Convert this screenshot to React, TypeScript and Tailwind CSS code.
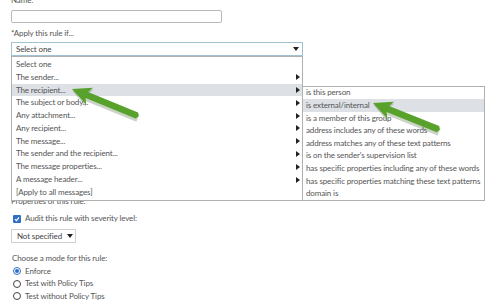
import * as React from "react";

const conditions = [
  { label: "Select one", sub: false },
  { label: "The sender...", sub: true },
  { label: "The recipient...", sub: true, active: true },
  { label: "The subject or body...", sub: true },
  { label: "Any attachment...", sub: true },
  { label: "Any recipient...", sub: true },
  { label: "The message...", sub: true },
  { label: "The sender and the recipient...", sub: true },
  { label: "The message properties...", sub: true },
  { label: "A message header...", sub: true },
  { label: "[Apply to all messages]", sub: false },
];

const recipientOptions = [
  "is this person",
  "is external/internal",
  "is a member of this group",
  "address includes any of these words",
  "address matches any of these text patterns",
  "is on the sender's supervision list",
  "has specific properties including any of these words",
  "has specific properties matching these text patterns",
  "domain is",
];

const RightCaret = () => (
  <svg width="4" height="6" viewBox="0 0 4 6" className="shrink-0">
    <path d="M0 0 L4 3 L0 6 Z" fill="#222" />
  </svg>
);

const DownCaret = () => (
  <svg width="6" height="4" viewBox="0 0 6 4" className="shrink-0">
    <path d="M0 0 L6 0 L3 4 Z" fill="#222" />
  </svg>
);

const GreenArrow = ({ x, y, angle, length }: { x: number; y: number; angle: number; length: number }) => (
  <g transform={`translate(${x} ${y}) rotate(${angle})`}>
    <polygon points={`1,1.5 20,-7.5 17,-2 ${length},-2 ${length},6 17,6 20,11.5`} fill="#2f4a1c" opacity="0.25" />
    <polygon points={`0,0 19,-9 16,-3.3 ${length - 2},-3.3 ${length},0 ${length - 2},3.3 16,3.3 19,9`} fill="#58a22c" />
  </g>
);

export default function App() {
  return (
    <div className="relative w-[504px] h-[308px] overflow-hidden bg-white pl-[11px] text-[8px] leading-[13px] tracking-[-0.13px] text-[#555]" style={{ fontFamily: "Lato, 'Open Sans', sans-serif" }}>
      <div className="-mt-[6px] h-[13px]">Name:</div>
      <div className="mt-[3px] h-[13px] w-[211px] rounded-[2px] border border-[#b8b8b8]" />

      <div className="mt-[4px] h-[13px]">*Apply this rule if...</div>

      <div className="relative mt-[2px]">
        <div className="flex h-[14px] w-[292px] items-center justify-between border border-[#9fc3d3] pl-[4px] pr-[3px] text-[#444]">
          <span>Select one</span>
          <DownCaret />
        </div>

        <div className="absolute left-0 top-[14px] z-10 w-[292px] border border-[#b0b0b0] bg-white py-[1px]">
          {conditions.map((c) => (
            <div key={c.label} className={`relative flex h-[12.8px] items-center justify-between pl-[4px] pr-[2px] ${c.active ? "bg-[#dde1e6]" : ""}`}>
              <span>{c.label}</span>
              {c.sub && <RightCaret />}
              {c.active && (
                <div className="absolute left-[290px] top-[2px] w-[183px] border border-[#b0b0b0] bg-white">
                  {recipientOptions.map((o, i) => (
                    <div key={o} className={`flex h-[12.6px] items-center whitespace-nowrap pl-[3px] ${i === 1 ? "bg-[#dde1e6]" : ""}`}>
                      {o}
                    </div>
                  ))}
                </div>
              )}
            </div>
          ))}
        </div>
      </div>

      <div className="mt-[139px] h-[13px]">Properties of this rule:</div>

      <div className="mt-[4px] flex h-[13px] items-center gap-[4px] pl-[2px]">
        <span className="flex h-[8px] w-[8px] items-center justify-center rounded-[1px] bg-[#2f6fc6]">
          <svg width="6" height="6" viewBox="0 0 6 6">
            <path d="M1 3.2 L2.5 4.6 L5 1.4" stroke="#fff" strokeWidth="1.2" fill="none" />
          </svg>
        </span>
        <span>Audit this rule with severity level:</span>
      </div>

      <div className="mt-[4px] flex h-[14px] w-[65px] items-center gap-[5px] whitespace-nowrap border border-[#d0d0d0] pl-[5px] text-[#444]">
        <span>Not specified</span>
        <DownCaret />
      </div>

      <div className="mt-[9px] h-[13px] pl-[1px]">Choose a mode for this rule:</div>
      <div className="flex flex-col pl-[2px]">
        {["Enforce", "Test with Policy Tips", "Test without Policy Tips"].map((m, i) => (
          <div key={m} className="flex h-[12.6px] items-center gap-[4px]">
            <span className={`flex h-[8px] w-[8px] items-center justify-center rounded-full border ${i === 0 ? "border-[#2f6fc6]" : "border-[#444]"}`}>
              {i === 0 && <span className="h-[4px] w-[4px] rounded-full bg-[#2f6fc6]" />}
            </span>
            <span>{m}</span>
          </div>
        ))}
      </div>

      <svg className="pointer-events-none absolute inset-0 z-20" width="504" height="308">
        <GreenArrow x={72} y={89} angle={22.2} length={72} />
        <GreenArrow x={373} y={103} angle={21.9} length={72} />
      </svg>
    </div>
  );
}
